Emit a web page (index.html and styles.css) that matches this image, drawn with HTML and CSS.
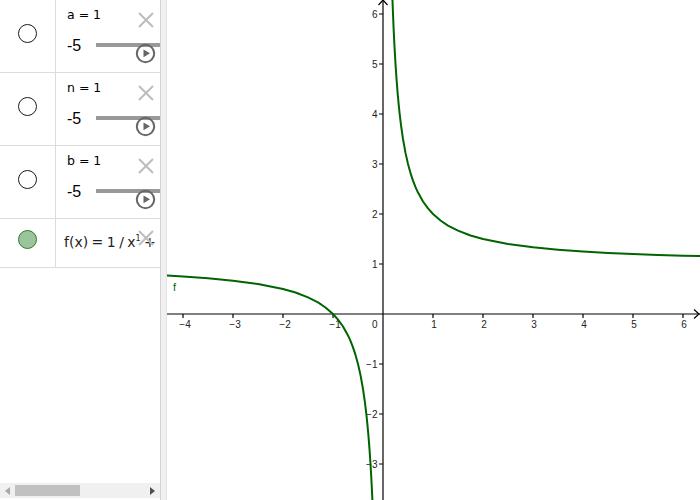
FILE: index.html
```html
<!DOCTYPE html>
<html>
<head>
<meta charset="utf-8">
<link rel="stylesheet" href="styles.css">
</head>
<body>
<div class="app">
  <div class="algebra">
    <div class="row">
      <div class="marble-col"><span class="marble"></span></div>
      <div class="content">
        <div class="label">a = 1</div>
        <div class="slider"><span class="min">-5</span><span class="track"></span></div>
      </div>
      <svg class="cross" viewBox="0 0 16 16"><path d="M1 1L15 15M15 1L1 15"/></svg>
      <svg class="play" viewBox="0 0 21 21"><circle cx="10.5" cy="10.5" r="8.7"/><path d="M8.5 6.5L15 10.3L8.5 14.2Z"/></svg>
    </div>
    <div class="row">
      <div class="marble-col"><span class="marble"></span></div>
      <div class="content">
        <div class="label">n = 1</div>
        <div class="slider"><span class="min">-5</span><span class="track"></span></div>
      </div>
      <svg class="cross" viewBox="0 0 16 16"><path d="M1 1L15 15M15 1L1 15"/></svg>
      <svg class="play" viewBox="0 0 21 21"><circle cx="10.5" cy="10.5" r="8.7"/><path d="M8.5 6.5L15 10.3L8.5 14.2Z"/></svg>
    </div>
    <div class="row">
      <div class="marble-col"><span class="marble"></span></div>
      <div class="content">
        <div class="label">b = 1</div>
        <div class="slider"><span class="min">-5</span><span class="track"></span></div>
      </div>
      <svg class="cross" viewBox="0 0 16 16"><path d="M1 1L15 15M15 1L1 15"/></svg>
      <svg class="play" viewBox="0 0 21 21"><circle cx="10.5" cy="10.5" r="8.7"/><path d="M8.5 6.5L15 10.3L8.5 14.2Z"/></svg>
    </div>
    <div class="row func">
      <div class="marble-col"><span class="marble on"></span></div>
      <div class="content fxc">
        <div class="fx">f(x) = 1 / x<sup>1</sup> + 1</div>
      </div>
      <svg class="cross fcross" viewBox="0 0 16 16"><path d="M1 1L15 15M15 1L1 15"/></svg>
    </div>
    <div class="hscroll">
      <span class="arr"><svg width="5" height="8" viewBox="0 0 5 8"><path d="M5 0L0 4L5 8Z" fill="#a8a8a8"/></svg></span>
      <span class="thumb"></span>
      <span class="spacer"></span>
      <span class="arr"><svg width="5" height="8" viewBox="0 0 5 8"><path d="M0 0L5 4L0 8Z" fill="#505050"/></svg></span>
    </div>
  </div>
  <div class="divider"></div>
  <div class="graphics">
    <svg class="plot" width="533" height="500" viewBox="0 0 533 500">
      <g transform="translate(216,314)">
        <g class="axes">
          <line x1="-216" y1="0" x2="317" y2="0"/>
          <line x1="0" y1="-314" x2="0" y2="186"/>
          <path d="M311 -4.5L316 0L311 4.5" fill="none"/>
          <path d="M-4.5 -309L0 -314L4.5 -309" fill="none"/>
          <path d="M-200 0V4M-150 0V4M-100 0V4M-50 0V4M50 0V4M100 0V4M150 0V4M200 0V4M250 0V4M300 0V4"/>
          <path d="M0 -300H-4M0 -250H-4M0 -200H-4M0 -150H-4M0 -100H-4M0 -50H-4M0 50H-4M0 100H-4M0 150H-4"/>
        </g>
        <g class="xl">
          <text x="-198" y="14">−4</text>
          <text x="-148" y="14">−3</text>
          <text x="-98" y="14">−2</text>
          <text x="-48" y="14">−1</text>
          <text x="51" y="14">1</text>
          <text x="101" y="14">2</text>
          <text x="151" y="14">3</text>
          <text x="201" y="14">4</text>
          <text x="251" y="14">5</text>
          <text x="301" y="14">6</text>
        </g>
        <g class="yl">
          <text x="-5.5" y="14">0</text>
          <text x="-5.5" y="-296">6</text>
          <text x="-5.5" y="-246">5</text>
          <text x="-5.5" y="-196">4</text>
          <text x="-5.5" y="-146">3</text>
          <text x="-5.5" y="-96">2</text>
          <text x="-5.5" y="-46">1</text>
          <text x="-5.5" y="54">−1</text>
          <text x="-5.5" y="104">−2</text>
          <text x="-5.5" y="154">−3</text>
        </g>
        <g transform="scale(50,-50)">
          <path class="curve" d="M0.18,6.556 L0.19,6.263 L0.2,6 L0.21,5.762 L0.22,5.545 L0.235,5.255 L0.25,5 L0.27,4.704 L0.29,4.448 L0.31,4.226 L0.33,4.030 L0.36,3.778 L0.4,3.5 L0.45,3.222 L0.5,3 L0.55,2.818 L0.6,2.667 L0.65,2.538 L0.7,2.429 L0.8,2.25 L0.9,2.111 L1,2 L1.15,1.870 L1.3,1.769 L1.5,1.667 L1.75,1.571 L2,1.5 L2.5,1.4 L3,1.333 L3.5,1.286 L4,1.25 L4.5,1.222 L5,1.2 L5.5,1.182 L6,1.167 L6.5,1.154"/>
          <path class="curve" d="M-4.5,0.778 L-4,0.75 L-3.5,0.714 L-3,0.667 L-2.5,0.6 L-2,0.5 L-1.75,0.429 L-1.5,0.333 L-1.3,0.231 L-1.15,0.130 L-1,0 L-0.9,-0.111 L-0.8,-0.25 L-0.7,-0.429 L-0.65,-0.538 L-0.6,-0.667 L-0.55,-0.818 L-0.5,-1 L-0.45,-1.222 L-0.4,-1.5 L-0.36,-1.778 L-0.33,-2.030 L-0.31,-2.226 L-0.29,-2.448 L-0.27,-2.704 L-0.25,-3 L-0.235,-3.255 L-0.22,-3.545 L-0.21,-3.762 L-0.2,-4"/>
        </g>
        <text class="flabel" x="-210" y="-23">f</text>
      </g>
    </svg>
  </div>
</div>
</body>
</html>
```
FILE: styles.css
```css
html, body {
  margin: 0;
  padding: 0;
}
body {
  width: 700px;
  height: 500px;
  overflow: hidden;
  background: #fff;
  font-family: "DejaVu Sans", sans-serif;
  color: #000;
}
.app {
  display: flex;
  height: 500px;
}
.algebra {
  width: 160px;
  display: flex;
  flex-direction: column;
  background: #fff;
}
.row {
  position: relative;
  display: flex;
  height: 72px;
  border-bottom: 1px solid #dcdcdc;
  flex-shrink: 0;
}
.row.func {
  height: 48px;
}
.marble-col {
  width: 56px;
  border-right: 1px solid #dcdcdc;
  display: flex;
  justify-content: center;
  align-items: flex-start;
  padding-top: 24px;
  box-sizing: border-box;
}
.func .marble-col {
  padding-top: 11px;
}
.marble {
  width: 17px;
  height: 17px;
  border: 1px solid #1a1a1a;
  border-radius: 50%;
  background: #fff;
}
.marble.on {
  background: #9cc49c;
  border-color: #2f7a2f;
}
.content {
  flex: 1;
  min-width: 0;
  overflow: hidden;
  padding: 8px 0 0 11px;
}
.label {
  font-size: 12.5px;
  line-height: 14px;
}
.slider {
  display: flex;
  margin-top: 15px;
  height: 18px;
}
.min {
  width: 29px;
  flex-shrink: 0;
  font-family: "Liberation Sans", sans-serif;
  font-size: 16px;
  line-height: 18px;
}
.track {
  flex: 1;
  height: 4px;
  margin-top: 6px;
  background: #999;
}
.fxc {
  padding: 15px 0 0 8px;
}
.fx {
  font-size: 14px;
  line-height: 16px;
  white-space: nowrap;
  color: #222;
  word-spacing: -1px;
}
.fx sup {
  font-size: 8px;
  vertical-align: 6px;
  line-height: 0;
}
.cross {
  position: absolute;
  left: 138px;
  top: 12px;
  width: 16px;
  height: 16px;
  stroke: #bdbdbd;
  stroke-width: 2;
  fill: none;
}
.fcross {
  top: 11px;
}
.play {
  position: absolute;
  left: 135px;
  top: 43px;
  width: 21px;
  height: 21px;
}
.play circle {
  fill: none;
  stroke: #666;
  stroke-width: 2;
}
.play path {
  fill: #666;
}
.hscroll {
  margin-top: auto;
  margin-bottom: 2px;
  height: 15px;
  background: #f0f0f0;
  display: flex;
  align-items: center;
}
.arr {
  width: 15px;
  display: flex;
  justify-content: center;
  align-items: center;
}
.arr svg {
  display: block;
}
.thumb {
  width: 65px;
  height: 11px;
  background: #c1c1c1;
}
.spacer {
  flex: 1;
}
.divider {
  width: 5px;
  background: #f0f0f0;
  border-left: 1px solid #d4d4d4;
  border-right: 1px solid #e4e4e4;
}
.graphics {
  flex: 1;
  background: #fff;
}
.plot {
  display: block;
}
.axes line, .axes path {
  stroke: #000;
  stroke-width: 1.2;
}
.xl text, .yl text {
  font-family: "Liberation Sans", sans-serif;
  font-size: 10px;
  fill: #222;
}
.xl text {
  text-anchor: middle;
}
.yl text {
  text-anchor: end;
}
.curve {
  fill: none;
  stroke: #006400;
  stroke-width: 2;
  vector-effect: non-scaling-stroke;
  stroke-linejoin: round;
}
.flabel {
  font-family: "Liberation Sans", sans-serif;
  font-size: 11px;
  fill: #006400;
}
```
